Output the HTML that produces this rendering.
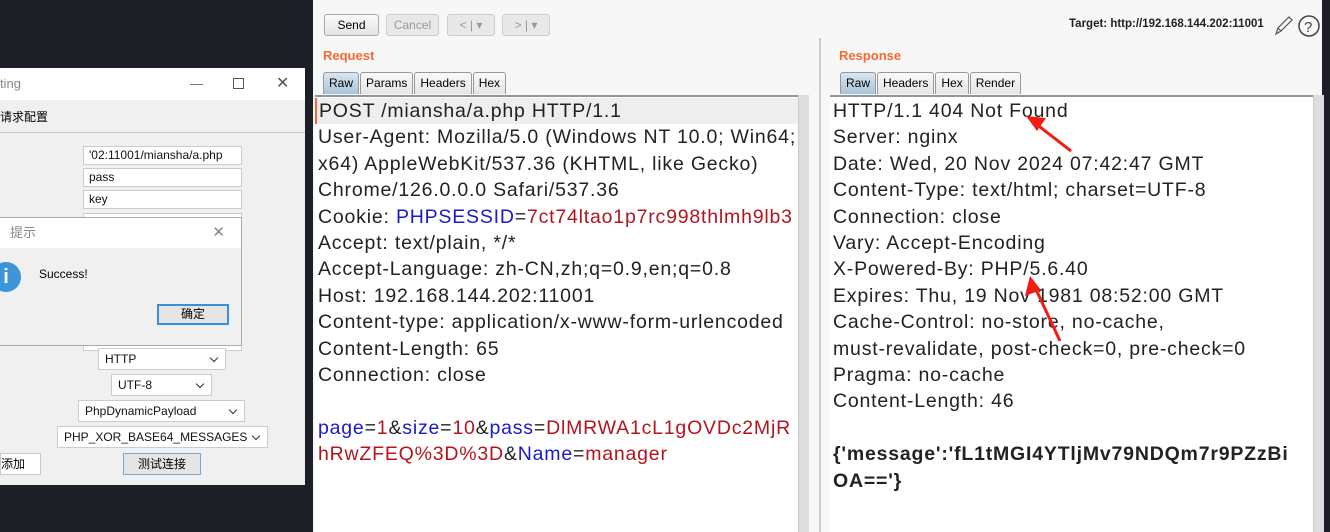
<!DOCTYPE html>
<html><head><meta charset="utf-8"><style>
*{margin:0;padding:0;box-sizing:border-box}
body{width:1330px;height:532px;background:#1d1f27;position:relative;overflow:hidden;font-family:"Liberation Sans","Noto Sans CJK SC",sans-serif}
.abs{position:absolute}
#burp{left:313px;top:0;width:1009px;height:532px;background:#f7f7f7}
.btn{position:absolute;top:14px;height:22px;border:1px solid #aaa;border-radius:3px;background:linear-gradient(#fafafa,#e4e4e4);font-size:12px;text-align:center;line-height:20px;color:#000}
.btn.dis{color:#999;border-color:#ccc;background:#e8e8e8}
.lbl{position:absolute;color:#f36b2f;font-weight:bold;font-size:13px}
.tabs{position:absolute;top:72px;height:22px;display:flex}
.tab{border:1px solid #999;border-bottom:none;border-radius:3px 3px 0 0;background:linear-gradient(#fafafa,#e4e4e4);font-size:12px;padding:0 5px;line-height:21px;margin-right:1px}
.tab.on{background:linear-gradient(#d8e6f0,#aac4d8)}
.ta{position:absolute;top:95px;background:#fff;border-top:2px solid #8a97a5;font-size:19.5px;letter-spacing:0.8px;line-height:26.4px;color:#222;padding:1px 0 0 3px;white-space:pre;overflow:hidden;font-family:"Liberation Sans",sans-serif}
.sb{position:absolute;top:95px;width:11px;height:437px;background:#ddd;border-left:1px solid #ccc}
.b{color:#1a1ac8}.r{color:#b4141e}
#dlg{left:0;top:68px;width:305px;height:417px;background:#f0f0f0}
.in{position:absolute;height:19px;background:#fff;border:1px solid #ccc;font-size:12px;padding-left:5px;line-height:17px;color:#111}
.sel{position:absolute;height:22px;background:#fff;border:1px solid #ccc;font-size:12px;padding-left:6px;line-height:20px;color:#111}
.sel:after{content:"";position:absolute;right:8px;top:6px;width:5px;height:5px;border-right:1px solid #333;border-bottom:1px solid #333;transform:rotate(45deg)}
</style></head><body>
<div id="dlg" class="abs">
 <div class="abs" style="left:0;top:0;width:305px;height:32px;background:#fff;font-size:13px;color:#888;line-height:32px">ting
  <span class="abs" style="left:190px;top:0;color:#666">—</span>
  <span class="abs" style="left:233px;top:10px;width:11px;height:11px;border:1px solid #555"></span>
  <span class="abs" style="left:276px;top:0;font-size:16px;color:#555">✕</span>
 </div>
 <div class="abs" style="left:0;top:40px;font-size:12px;color:#000">请求配置</div>
 <div class="abs" style="left:0;top:64px;width:305px;height:1px;background:#ccc"></div>
 <div class="in" style="left:83px;top:78px;width:159px">'02:11001/miansha/a.php</div>
 <div class="in" style="left:83px;top:100px;width:159px">pass</div>
 <div class="in" style="left:83px;top:122px;width:159px">key</div>
 <div class="in" style="left:83px;top:145px;width:159px;height:138px"></div>
 <div class="abs" style="left:0;top:149px;width:242px;height:129px;background:#f0f0f0;border:1px solid #aaa;border-left:none">
  <div style="height:30px;background:#fff;font-size:13px;color:#888;line-height:30px;padding-left:10px">提示<span style="position:absolute;right:16px;color:#888;font-size:15px">✕</span></div>
  <div class="abs" style="left:-9px;top:44px;width:30px;height:30px;border-radius:50%;background:#3e94d8;color:#fff;font-weight:bold;text-align:center;line-height:30px;font-size:20px">i</div>
  <div class="abs" style="left:39px;top:49px;font-size:12px;color:#000">Success!</div>
  <div class="abs" style="left:157px;top:86px;width:72px;height:21px;border:2px solid #3b8ed8;background:#e5e5e5;font-size:12px;text-align:center;line-height:17px">确定</div>
 </div>
 <div class="sel" style="left:98px;top:280px;width:128px">HTTP</div>
 <div class="sel" style="left:111px;top:306px;width:101px">UTF-8</div>
 <div class="sel" style="left:78px;top:332px;width:167px">PhpDynamicPayload</div>
 <div class="sel" style="left:57px;top:358px;width:211px">PHP_XOR_BASE64_MESSAGES</div>
 <div class="abs" style="left:0;top:385px;width:41px;height:22px;background:#fff;border:1px solid #ccc;font-size:12px;line-height:20px">添加</div>
 <div class="abs" style="left:123px;top:385px;width:78px;height:22px;background:#e5e5e5;border:1px solid #7aa7d6;font-size:12px;line-height:20px;text-align:center">测试连接</div>
</div>
<div id="burp" class="abs">
 <div class="btn" style="left:11px;width:55px">Send</div>
 <div class="btn dis" style="left:73px;width:53px">Cancel</div>
 <div class="btn dis" style="left:134px;width:48px">&lt; | ▾</div>
 <div class="btn dis" style="left:189px;width:48px">&gt; | ▾</div>
 <div class="abs" style="left:756px;top:18px;font-size:11.5px;font-weight:bold;color:#222">Target: http://192.168.144.202:11001</div>
 <svg class="abs" style="left:960px;top:14px" width="50" height="24"><path d="M3 20 L5 14 L16 3 L19 6 L8 17 Z M5 14 L8 17" fill="none" stroke="#555" stroke-width="1.2"/><circle cx="36" cy="12" r="10" fill="none" stroke="#444" stroke-width="1.5"/><text x="31" y="18" font-size="15" fill="#444" font-family="Liberation Sans">?</text></svg>
 <div class="lbl" style="left:10px;top:48px">Request</div>
 <div class="lbl" style="left:526px;top:48px">Response</div>
 <div class="tabs" style="left:10px"><div class="tab on">Raw</div><div class="tab">Params</div><div class="tab">Headers</div><div class="tab">Hex</div></div>
 <div class="tabs" style="left:527px"><div class="tab on">Raw</div><div class="tab">Headers</div><div class="tab">Hex</div><div class="tab">Render</div></div>
 <div class="abs" style="left:506px;top:38px;width:2px;height:494px;background:#ccc"></div>
 <div class="ta" style="left:2px;width:483px;height:437px"><div style="background:#eee;margin-left:-3px;padding-left:2px;border-left:2px solid #f36b2f">POST /miansha/a.php HTTP/1.1</div>User-Agent: Mozilla/5.0 (Windows NT 10.0; Win64;
x64) AppleWebKit/537.36 (KHTML, like Gecko)
Chrome/126.0.0.0 Safari/537.36
Cookie: <span class="b">PHPSESSID</span>=<span class="r">7ct74ltao1p7rc998thlmh9lb3</span>
Accept: text/plain, */*
Accept-Language: zh-CN,zh;q=0.9,en;q=0.8
Host: 192.168.144.202:11001
Content-type: application/x-www-form-urlencoded
Content-Length: 65
Connection: close

<span class="b">page</span>=<span class="r">1</span>&amp;<span class="b">size</span>=<span class="r">10</span>&amp;<span class="b">pass</span>=<span class="r">DlMRWA1cL1gOVDc2MjR</span>
<span class="r">hRwZFEQ%3D%3D</span>&amp;<span class="b">Name</span>=<span class="r">manager</span></div>
 <div class="sb" style="left:485px"></div>
 <div class="ta" style="left:517px;width:483px;height:437px">HTTP/1.1 404 Not Found
Server: nginx
Date: Wed, 20 Nov 2024 07:42:47 GMT
Content-Type: text/html; charset=UTF-8
Connection: close
Vary: Accept-Encoding
X-Powered-By: PHP/5.6.40
Expires: Thu, 19 Nov 1981 08:52:00 GMT
Cache-Control: no-store, no-cache,
must-revalidate, post-check=0, pre-check=0
Pragma: no-cache
Content-Length: 46

<b>{'message':'fL1tMGI4YTljMv79NDQm7r9PZzBi
OA=='}</b></div>
 <div class="sb" style="left:1000px"></div>
 <svg class="abs" style="left:0;top:0" width="1009" height="532"><g fill="#f21c14" stroke="#f21c14"><line x1="758" y1="151" x2="718" y2="120" stroke-width="3"/><polygon points="713,116 733,118 724,131" stroke="none"/><line x1="747" y1="341" x2="720" y2="283" stroke-width="3"/><polygon points="717,276 712,296 728,290" stroke="none"/></g></svg>
</div>
</body></html>
